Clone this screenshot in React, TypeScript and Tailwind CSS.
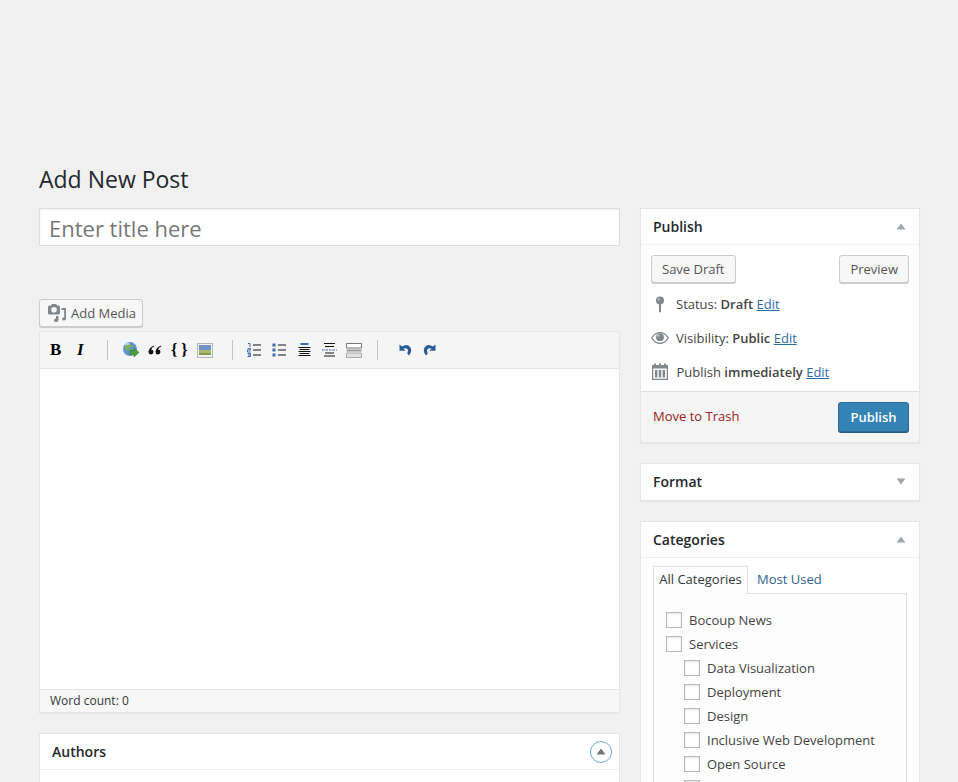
const checkRows = [
  { label: 'Bocoup News', nested: false },
  { label: 'Services', nested: false },
  { label: 'Data Visualization', nested: true },
  { label: 'Deployment', nested: true },
  { label: 'Design', nested: true },
  { label: 'Inclusive Web Development', nested: true },
  { label: 'Open Source', nested: true },
  { label: '', nested: true },
];

function Caret({ up = true, color = '#a0a5aa' }: { up?: boolean; color?: string }) {
  return (
    <svg width="10" height="7" viewBox="0 0 10 7" className="block">
      <path d={up ? 'M5 0.5 L9.5 6.5 L0.5 6.5 Z' : 'M0.5 0.5 L9.5 0.5 L5 6.5 Z'} fill={color} />
    </svg>
  );
}

function BoxHeader({ title, up = true }: { title: string; up?: boolean }) {
  return (
    <div className="flex items-center justify-between h-[35px] pl-[12px] pr-[13px]">
      <h2 className="text-[14px] font-semibold text-[#23282d]">{title}</h2>
      <Caret up={up} />
    </div>
  );
}

function MediaIcon() {
  return (
    <svg width="18" height="18" viewBox="0 0 18 18" className="block">
      <path fillRule="evenodd" fill="#82878c" d="M1.5 1.5 H3 L4 0 H8 L9 1.5 H10.5 Q12 1.5 12 3 V9 Q12 10.5 10.5 10.5 H1.5 Q0 10.5 0 9 V3 Q0 1.5 1.5 1.5 Z M6 3 A2.8 2.8 0 1 0 6 8.6 A2.8 2.8 0 1 0 6 3 Z" />
      <path fill="#82878c" d="M13.5 4 H18 V14.5 Q18 16.5 16 16.5 Q14 16.5 14 15 Q14 13.5 16.2 13.3 V6 H13.5 Z" />
      <path fill="#82878c" d="M8 12 H10.5 V15.5 Q10.5 18 8.2 18 Q6 18 6 16.4 Q6 14.8 8 14.6 Z" />
    </svg>
  );
}

function GlobeIcon() {
  return (
    <svg width="18" height="18" viewBox="0 0 18 18" className="block">
      <circle cx="8" cy="8" r="7" fill="#5f95c8" />
      <circle cx="5.5" cy="3.8" r="2.4" fill="#b9d3ea" />
      <path d="M3 5 Q6 3 9 3.5 L11 5.5 L8 6.5 L8 9.5 L5 9.5 L3 7.5 Z" fill="#7fae5a" />
      <path d="M8 9.5 H12 V7 L17 11.5 L12 16 V13.5 H8 Z" fill="#4aa03c" stroke="#2f7a28" strokeWidth="0.6" />
    </svg>
  );
}

function QuoteIcon() {
  return (
    <svg width="14" height="10" viewBox="0 0 14 10" className="block">
      <path fill="#111" d="M6 0.5 Q1 2.5 0.5 6.8 A2.5 2.5 0 1 0 3.2 4.4 Q3.6 2.6 6.3 1.2 Z" />
      <path fill="#111" d="M13 0.5 Q8 2.5 7.5 6.8 A2.5 2.5 0 1 0 10.2 4.4 Q10.6 2.6 13.3 1.2 Z" />
    </svg>
  );
}

function ImageIcon() {
  return (
    <svg width="16" height="15" viewBox="0 0 16 15" className="block">
      <rect x="0.5" y="0.5" width="15" height="14" fill="#f2f2f2" stroke="#b5b5b5" />
      <rect x="2" y="2" width="12" height="5" fill="#6f93c4" />
      <rect x="2" y="7" width="12" height="3" fill="#a8bb6a" />
      <rect x="2" y="10" width="12" height="2" fill="#7f9c46" />
    </svg>
  );
}

function OrderedIcon() {
  return (
    <svg width="15" height="14" viewBox="0 0 15 14" className="block">
      <path d="M1 0.5 H3 V4 M0.5 5.5 H3.5 V7 H0.5 V9 H3.5 M0.5 10.5 H3.5 V13.5 H0.5 M1 12 H3.5" stroke="#3d6bb3" strokeWidth="1" fill="none" />
      <path d="M6 2 H14 M6 7 H14 M6 12 H14" stroke="#111" strokeWidth="1.2" />
    </svg>
  );
}

function BulletIcon() {
  return (
    <svg width="15" height="14" viewBox="0 0 15 14" className="block">
      <rect x="0.5" y="0.5" width="3" height="3" fill="#3d6bb3" />
      <rect x="0.5" y="5.5" width="3" height="3" fill="#3d6bb3" />
      <rect x="0.5" y="10.5" width="3" height="3" fill="#3d6bb3" />
      <path d="M6 2 H14 M6 7 H14 M6 12 H14" stroke="#111" strokeWidth="1.2" />
    </svg>
  );
}

function BlockIcon() {
  return (
    <svg width="13" height="14" viewBox="0 0 13 14" className="block">
      <rect x="2.5" y="0" width="8" height="2" fill="#3d6bb3" />
      <path d="M0.5 4.5 H12.5 M1.5 6.5 H11.5 M0.5 8.5 H12.5 M1.5 10.5 H11.5 M0.5 12.5 H12.5" stroke="#111" strokeWidth="1" />
    </svg>
  );
}

function MoreIcon() {
  return (
    <svg width="15" height="14" viewBox="0 0 15 14" className="block">
      <path d="M2 0.5 H13 M3 3.5 H12 M3 10 H12 M2 13 H13" stroke="#111" strokeWidth="1" />
      <path d="M0 7 H15" stroke="#3d6bb3" strokeWidth="1" strokeDasharray="2.5 1" />
    </svg>
  );
}

function PageBreakIcon() {
  return (
    <svg width="16" height="15" viewBox="0 0 16 15" className="block">
      <path d="M0.5 5 V0.5 H15.5 V5 Z" fill="#fff" stroke="#777" />
      <rect x="0.5" y="6.5" width="15" height="2" fill="#999" />
      <path d="M0.5 10 H15.5 V14.5 H0.5 Z" fill="#e0e0e0" stroke="#aaa" />
    </svg>
  );
}

function UndoIcon({ flip = false }: { flip?: boolean }) {
  return (
    <svg width="13" height="12" viewBox="0 0 13 12" className={flip ? 'block -scale-x-100' : 'block'}>
      <path d="M0.5 0.5 V6.8 H6.5 L4.4 4.8 Q6.8 3.4 8.4 5 Q9.6 6.6 8.2 9.6 L10 11.5 Q13.6 7 11.4 3.4 Q8.2 -0.8 3 2.6 Z" fill="#2b5a99" />
    </svg>
  );
}

function PinIcon() {
  return (
    <svg width="10" height="17" viewBox="0 0 10 17" className="block">
      <circle cx="5" cy="4.5" r="4" fill="#82878c" />
      <circle cx="3.8" cy="3.4" r="1.1" fill="#c8cacc" />
      <rect x="4" y="7.5" width="2" height="9" rx="1" fill="#82878c" />
    </svg>
  );
}

function EyeIcon() {
  return (
    <svg width="18" height="12" viewBox="0 0 18 12" className="block">
      <path fillRule="evenodd" fill="#82878c" d="M9 0 C13 0 16 2.6 18 6 C16 9.4 13 12 9 12 C5 12 2 9.4 0 6 C2 2.6 5 0 9 0 Z M9 1.3 C5.8 1.3 3.2 3.2 1.5 6 C3.2 8.8 5.8 10.7 9 10.7 C12.2 10.7 14.8 8.8 16.5 6 C14.8 3.2 12.2 1.3 9 1.3 Z" />
      <circle cx="9" cy="5.2" r="3.9" fill="#82878c" />
      <circle cx="7.3" cy="3.6" r="1.1" fill="#d5d6d8" />
    </svg>
  );
}

function CalendarIcon() {
  return (
    <svg width="16" height="17" viewBox="0 0 16 17" className="block">
      <path fillRule="evenodd" fill="#82878c" d="M0 2 H2 V0.5 H4 V2 H7 V0.5 H9 V2 H12 V0.5 H14 V2 H16 V17 H0 Z M1.3 5.5 V15.7 H14.7 V5.5 Z" />
      <rect x="3" y="7" width="2.4" height="7.5" fill="#82878c" />
      <rect x="6.8" y="7" width="2.4" height="7.5" fill="#82878c" />
      <rect x="10.6" y="7" width="2.4" height="7.5" fill="#82878c" />
    </svg>
  );
}

export default function App() {
  return (
    <div className="h-[782px] overflow-hidden bg-[#f1f1f1] pt-[160px] pl-[39px] pr-[38px] text-[13px] leading-[18px] text-[#444] font-['Open_Sans',sans-serif]">
      <h1 className="h-[48px] pt-[3px] text-[23px] leading-[32px] text-[#23282d]">Add New Post</h1>

      <div className="flex gap-[20px] items-start">
        {/* Main column */}
        <div className="w-[581px] shrink-0">
          <div className="h-[38px] bg-white border border-[#ddd] flex items-center pl-[9px] pt-[1px] text-[22px] text-[#777] shadow-[inset_0_1px_2px_rgba(0,0,0,0.07)]">
            Enter title here
          </div>

          <div className="mt-[53px] w-[104px] h-[28px] flex items-center gap-[5px] pl-[8px] bg-[#f7f7f7] border border-[#ccc] rounded-[3px] shadow-[0_1px_0_#ccc] text-[#555]">
            <MediaIcon />
            <span>Add Media</span>
          </div>

          <div className="mt-[4px] border border-[#e5e5e5] shadow-[0_1px_1px_rgba(0,0,0,0.04)]">
            <div className="h-[37px] bg-[#f5f5f5] border-b border-[#e5e5e5] flex items-center pl-[10px] text-black">
              <span className="w-[16px] font-['Liberation_Serif',serif] font-bold text-[17px]">B</span>
              <span className="ml-[11px] w-[10px] font-['Liberation_Serif',serif] italic font-bold text-[17px]">I</span>
              <span className="ml-[20px] w-px h-[20px] bg-[#c4c4c4]" />
              <span className="ml-[14px]"><GlobeIcon /></span>
              <span className="ml-[8px] w-[14px]"><QuoteIcon /></span>
              <span className="ml-[9px] w-[20px] font-['Liberation_Serif',serif] font-bold text-[16px] whitespace-pre">{'{ }'}</span>
              <span className="ml-[6px]"><ImageIcon /></span>
              <span className="ml-[19px] w-px h-[20px] bg-[#c4c4c4]" />
              <span className="ml-[14px]"><OrderedIcon /></span>
              <span className="ml-[10px]"><BulletIcon /></span>
              <span className="ml-[11px]"><BlockIcon /></span>
              <span className="ml-[11px]"><MoreIcon /></span>
              <span className="ml-[9px]"><PageBreakIcon /></span>
              <span className="ml-[15px] w-px h-[20px] bg-[#c4c4c4]" />
              <span className="ml-[21px]"><UndoIcon /></span>
              <span className="ml-[11px]"><UndoIcon flip /></span>
            </div>
            <div className="h-[320px] bg-white" />
            <div className="h-[23px] bg-[#f7f7f7] border-t border-[#e5e5e5] flex items-center pl-[10px] text-[12px] text-[#32373c]">
              Word count: 0
            </div>
          </div>

          <section className="mt-[20px] bg-white border border-[#e5e5e5] h-[60px]">
            <div className="h-[36px] border-b border-[#eee] flex items-center justify-between pl-[12px] pr-[7px]">
              <h2 className="text-[14px] font-semibold text-[#23282d]">Authors</h2>
              <span className="w-[22px] h-[22px] rounded-full border-[1.5px] border-[#6ea8d8] flex items-center justify-center">
                <Caret color="#72777c" />
              </span>
            </div>
          </section>
        </div>

        {/* Side column */}
        <div className="w-[280px] shrink-0 flex flex-col">
          <section className="bg-white border border-[#e5e5e5] shadow-[0_1px_1px_rgba(0,0,0,0.04)]">
            <div className="border-b border-[#eee]">
              <BoxHeader title="Publish" />
            </div>
            <div className="h-[146px] pt-[10px] px-[10px]">
              <div className="flex justify-between">
                <span className="h-[28px] px-[10px] flex items-center bg-[#f7f7f7] border border-[#ccc] rounded-[3px] shadow-[0_1px_0_#ccc] text-[#555]">Save Draft</span>
                <span className="h-[28px] px-[10px] flex items-center bg-[#f7f7f7] border border-[#ccc] rounded-[3px] shadow-[0_1px_0_#ccc] text-[#555]">Preview</span>
              </div>
              <div className="mt-[12px] h-[34px] flex items-start">
                <span className="ml-[4px] w-[21px] pt-px"><PinIcon /></span>
                <span>Status: <b className="font-semibold">Draft</b> <a className="text-[#2e6da4] underline">Edit</a></span>
              </div>
              <div className="h-[34px] flex items-start">
                <span className="w-[25px] pt-[3px]"><EyeIcon /></span>
                <span>Visibility: <b className="font-semibold">Public</b> <a className="text-[#2e6da4] underline">Edit</a></span>
              </div>
              <div className="h-[26px] flex items-start">
                <span className="ml-px w-[24.5px]"><CalendarIcon /></span>
                <span>Publish <b className="font-semibold">immediately</b> <a className="text-[#2e6da4] underline">Edit</a></span>
              </div>
            </div>
            <div className="h-[51px] bg-[#f5f5f5] border-t border-[#ddd] flex items-center justify-between pl-[12px] pr-[10px]">
              <a className="text-[#9a2020] pb-[2px]">Move to Trash</a>
              <span className="h-[30px] w-[71px] flex items-center justify-center bg-[#3583b5] border border-[#2a6a94] rounded-[3px] shadow-[0_1px_0_#1f5f8a] text-white font-semibold">Publish</span>
            </div>
          </section>

          <section className="mt-[20px] pb-[1px] bg-white border border-[#e5e5e5] shadow-[0_1px_1px_rgba(0,0,0,0.04)]">
            <BoxHeader title="Format" up={false} />
          </section>

          <section className="mt-[20px] bg-white border border-[#e5e5e5]">
            <div className="border-b border-[#eee]">
              <BoxHeader title="Categories" />
            </div>
            <div className="pt-[8px] pl-[12px] pr-[12px]">
              <div className="flex h-[28px] relative z-10">
                <span className="w-[95px] h-[28px] pb-[3px] flex items-center justify-center bg-[#fdfdfd] border border-[#dfdfdf] border-b-0 text-[#32373c]">All Categories</span>
                <a className="ml-[9px] pb-[2px] flex items-center text-[#2f6391]">Most Used</a>
              </div>
              <div className="-mt-px h-[300px] bg-[#fdfdfd] border border-[#dfdfdf] pt-[14px] pl-[12px]">
                {checkRows.map((row, i) => (
                  <div key={i} className={row.nested ? 'h-[24px] flex items-center pl-[18px]' : 'h-[24px] flex items-center'}>
                    <span className="w-[16px] h-[16px] bg-white border border-[#b4b9be] shadow-[inset_0_1px_2px_rgba(0,0,0,0.1)] shrink-0" />
                    <span className="ml-[7px] text-[#444]">{row.label}</span>
                  </div>
                ))}
              </div>
            </div>
          </section>
        </div>
      </div>
    </div>
  );
}
